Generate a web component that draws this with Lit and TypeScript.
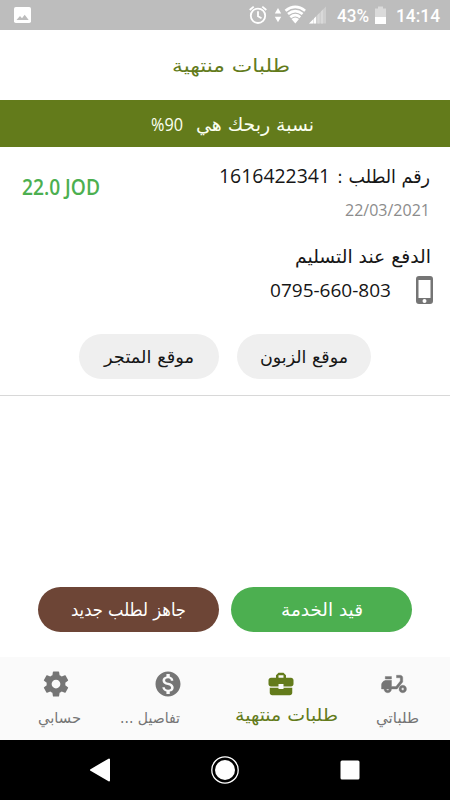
import { LitElement, html, svg, css } from "lit";
import { customElement, property } from "lit/decorators.js";

/** A line of text drawn to an exact advance width; baseline sits 20px below the top. */
@customElement("fit-label")
class FitLabel extends LitElement {
  @property() text = "";
  @property({ type: Number }) width = 100;
  @property({ type: Number }) size = 17;
  static styles = css`
    :host { display: block; flex: none; direction: rtl; }
    :host(.latin) { direction: ltr; }
    svg { display: block; overflow: visible; }
    text { fill: currentColor; text-anchor: middle; }
  `;
  render() {
    return html`<svg width=${this.width} height="28">
      ${svg`<text x="50%" y="20" font-size=${this.size} textLength=${this.width} lengthAdjust="spacingAndGlyphs">${this.text}</text>`}
    </svg>`;
  }
}

const GEAR = "M19.43 12.98c.04-.32.07-.64.07-.98s-.03-.66-.07-.98l2.11-1.65c.19-.15.24-.42.12-.64l-2-3.46c-.12-.22-.39-.3-.61-.22l-2.49 1c-.52-.4-1.08-.73-1.69-.98l-.38-2.65C14.46 2.18 14.25 2 14 2h-4c-.25 0-.46.18-.49.42l-.38 2.65c-.61.25-1.17.59-1.69.98l-2.49-1c-.23-.09-.49 0-.61.22l-2 3.46c-.13.22-.07.49.12.64l2.11 1.65c-.04.32-.07.65-.07.98s.03.66.07.98l-2.11 1.65c-.19.15-.24.42-.12.64l2 3.46c.12.22.39.3.61.22l2.49-1c.52.4 1.08.73 1.69.98l.38 2.65c.03.24.24.42.49.42h4c.25 0 .46-.18.49-.42l.38-2.65c.61-.25 1.17-.59 1.69-.98l2.49 1c.23.09.49 0 .61-.22l2-3.46c.12-.22.07-.49-.12-.64l-2.11-1.65zM12 15.5c-1.93 0-3.500-1.570-3.500-3.500s1.570-3.500 3.500-3.500 3.500 1.570 3.500 3.500-1.570 3.500-3.500 3.500z";
const MONEY = "M12 2C6.48 2 2 6.48 2 12s4.48 10 10 10 10-4.48 10-10S17.52 2 12 2zm1.41 16.09V20h-2.67v-1.93c-1.71-.36-3.16-1.46-3.27-3.4h1.96c.1 1.05.82 1.87 2.65 1.87 1.96 0 2.4-.98 2.4-1.59 0-.83-.44-1.61-2.67-2.14-2.48-.6-4.18-1.62-4.18-3.67 0-1.72 1.39-2.84 3.11-3.21V4h2.67v1.95c1.86.45 2.79 1.86 2.85 3.39H14.3c-.05-1.11-.64-1.87-2.22-1.87-1.5 0-2.4.68-2.4 1.64 0 .84.65 1.39 2.67 1.91s4.18 1.39 4.18 3.91c-.01 1.83-1.38 2.83-3.12 3.16z";
const CASE = "M10 16v-1H3.01L3 19c0 1.11.89 2 2 2h14c1.11 0 2-.89 2-2v-4h-7v1h-4zm10-9h-4.01V5l-2-2h-4l-2 2v2H4c-1.1 0-2 .9-2 2v3c0 1.11.89 2 2 2h6v-2h4v2h6c1.1 0 2-.9 2-2V9c0-1.1-.9-2-2-2zm-6 0h-4V5h4v2z";
const MOPED = "M19 7c0-1.1-.9-2-2-2h-3v2h3v2.65L13.52 14H10V9H6c-2.21 0-4 1.79-4 4v3h2c0 1.66 1.34 3 3 3s3-1.34 3-3h4.48L19 10.35V7zM7 17c-.55 0-1-.45-1-1h2c0 .55-.45 1-1 1zM5 6h5v2H5zM19 13c-1.66 0-3 1.34-3 3s1.34 3 3 3 3-1.34 3-3-1.34-3-3-3zm0 4c-.55 0-1-.45-1-1s.45-1 1-1 1 .45 1 1-.45 1-1 1z";

@customElement("app-root")
class AppRoot extends LitElement {
  static styles = css`
    :host {
      display: flex; flex-direction: column; width: 450px; height: 800px;
      background: #fff; color: #161616; overflow: hidden;
      font-family: "DejaVu Sans Condensed", "DejaVu Sans", sans-serif;
    }
    * { box-sizing: border-box; }
    svg { display: block; flex: none; }
    .latin { font-family: "Open Sans", "Noto Sans", sans-serif; }
    .status { height: 30px; flex: none; background: #bdbdbd; color: #fff; }
    .status text { font: 500 18px Roboto, sans-serif; fill: #fff; }
    .title { height: 70px; flex: none; padding: 22px 0 0 11px; display: flex; justify-content: center; color: #637b1b; }
    .banner { height: 47px; flex: none; background: #637b1b; color: #fbfff0; display: flex; gap: 13px; padding: 11px 0 0 151px; }
    .order { height: 249px; flex: none; border-bottom: 1px solid #d8d8d8; display: flex; flex-direction: column; }
    .top { display: flex; justify-content: space-between; padding: 16px 20px 0 22px; height: 93px; }
    .price { color: #4caf50; padding-top: 12px; font-weight: 600; }
    .meta { display: flex; flex-direction: column; align-items: flex-end; }
    .number { display: flex; gap: 7px; height: 33px; }
    .date { color: #8c8c8c; }
    .pay { display: flex; justify-content: flex-end; padding: 3px 19px 0 0; height: 36px; }
    .phone { display: flex; justify-content: flex-end; gap: 25px; height: 58px; padding-right: 17px; }
    .phone fit-label { margin-top: 1px; }
    .pills { display: flex; gap: 18px; padding-left: 79px; }
    .pill { height: 45px; border-radius: 23px; background: #efefef; display: flex; justify-content: center; padding-top: 9px; }
    .store { width: 140px; }
    .client { width: 134px; }
    .space { flex: 1; }
    .actions { display: flex; gap: 12px; padding-left: 38px; height: 70px; flex: none; color: #fff; }
    .action { width: 181px; height: 45px; border-radius: 23px; display: flex; justify-content: center; padding-top: 9px; }
    .ready { background: #6d4536; }
    .busy { background: #4caf50; }
    .tabs { height: 83px; flex: none; background: #fafafa; display: grid; grid-template-columns: repeat(4, 1fr); color: #757575; }
    .tab { display: flex; flex-direction: column; align-items: center; padding-top: 12px; }
    .tab svg { fill: currentColor; }
    .tab fit-label { margin-top: 4px; }
    .account fit-label { margin-left: 7px; }
    .details fit-label { margin-right: 37px; }
    .orders fit-label { margin-left: 7px; }
    .orders svg { stroke: currentColor; stroke-width: 0.3px; }
    .active { color: #637b1b; }
    .active fit-label { margin-top: 2px; margin-left: 10px; }
    .system { height: 60px; flex: none; background: #000; }
  `;

  label(text: string, width: number, size = 18.5, cls = "") {
    return html`<fit-label class=${cls} .text=${text} .width=${width} .size=${size}></fit-label>`;
  }

  icon(d: string, w = 30) {
    return html`<svg width=${w} height="30" viewBox="0 0 24 24"><path fill-rule="evenodd" d=${d}></path></svg>`;
  }

  statusBar() {
    return html`<svg class="status" width="450" height="30" viewBox="0 0 450 30">
      <rect x="14" y="7" width="17" height="16" rx="1.8" fill="#fff"></rect>
      <path d="M16.5 20l3.5-4 2 2.3 2.7-3.5 4 5.2z" fill="#bdbdbd"></path>
      <g fill="none" stroke="#fff" stroke-width="1.8">
        <circle cx="258" cy="15.8" r="7.2"></circle>
        <path d="M258 11.3v5l3.5 2M249.7 10l4-3.4M266.300 10l-4-3.4"></path>
      </g>
      <path d="M278 8l3.200 5.500h-6.400zM278 22.200l3.200-5.500h-6.400z" fill="#fff"></path>
      <path d="M295.300 23.500L291.500 19Q295.300 16 299 19z" fill="#fff"></path>
      <g fill="none" stroke="#fff" stroke-width="2.700">
        <path d="M285.500 10.700Q295.300 3.200 305.100 10.700M288 14Q295.300 8.300 302.600 14M290.300 17.200Q295.300 13.200 300.300 17.200"></path>
      </g>
      <path d="M309 23.500L326 6.500v17z" fill="#cecece"></path>
      <path d="M314 23.500v-5l2-2v7zM309 23.500l4.500-4.500v4.500z" fill="#fff"></path>
      <path d="M317.500 23.500V15l2-2v10.500zM321 23.500v-12l2-2v14z" fill="#d9d9d9"></path>
      <text x="337" y="21.500" textLength="32" lengthAdjust="spacingAndGlyphs">43%</text>
      <path d="M375 8.500h3v-2h5v2h3v8.500h-11z" fill="#dadada"></path>
      <path d="M375 17h11v7h-11z" fill="#fff"></path>
      <text x="396" y="21.500" textLength="44" lengthAdjust="spacingAndGlyphs">14:14</text>
    </svg>`;
  }

  render() {
    return html`
      ${this.statusBar()}
      <div class="title">${this.label("طلبات منتهية", 118)}</div>
      <div class="banner">${this.label("%90", 32, 19, "latin")}${this.label("نسبة ربحك هي", 118)}</div>
      <div class="order">
        <div class="top">
          <div class="price">${this.label("22.0 JOD", 78, 21, "latin")}</div>
          <div class="meta">
            <div class="number">${this.label("1616422341", 111, 20, "latin")}${this.label("رقم الطلب :", 93)}</div>
            <div class="date">${this.label("22/03/2021", 85, 15.5, "latin")}</div>
          </div>
        </div>
        <div class="pay">${this.label("الدفع عند التسليم", 136)}</div>
        <div class="phone">
          ${this.label("0795-660-803", 121, 18.5, "latin")}
          <svg width="17" height="28" viewBox="0 0 17 28"><path fill="#757575" fill-rule="evenodd" d="M3 0h11a3 3 0 0 1 3 3v22a3 3 0 0 1-3 3H3a3 3 0 0 1-3-3V3a3 3 0 0 1 3-3zM2.500 4v18h12V4zM8.500 23a2 2 0 1 0 0 4 2 2 0 0 0 0-4z"></path></svg>
        </div>
        <div class="pills">
          <div class="pill store">${this.label("موقع المتجر", 90, 17.5)}</div>
          <div class="pill client">${this.label("موقع الزبون", 88, 17.5)}</div>
        </div>
      </div>
      <div class="space"></div>
      <div class="actions">
        <div class="action ready">${this.label("جاهز لطلب جديد", 115, 18)}</div>
        <div class="action busy">${this.label("قيد الخدمة", 82, 18)}</div>
      </div>
      <div class="tabs">
        <div class="tab account">${this.icon(GEAR)}${this.label("حسابي", 43, 15)}</div>
        <div class="tab details">${this.icon(MONEY)}${this.label("تفاصيل ...", 60, 15)}</div>
        <div class="tab active">${this.icon(CASE)}${this.label("طلبات منتهية", 103, 17.5)}</div>
        <div class="tab orders">${this.icon(MOPED)}${this.label("طلباتي", 43, 15)}</div>
      </div>
      <svg class="system" width="450" height="60" viewBox="0 0 450 60">
        <path d="M91 30L109 19.500v21z" fill="#fff" stroke="#fff" stroke-width="2" stroke-linejoin="round"></path>
        <circle cx="225" cy="30" r="10" fill="#fff"></circle>
        <circle cx="225" cy="30" r="13.200" fill="none" stroke="#fff" stroke-width="1.300"></circle>
        <rect x="340.500" y="20.500" width="19" height="19" rx="1.500" fill="#fff"></rect>
      </svg>
    `;
  }
}
